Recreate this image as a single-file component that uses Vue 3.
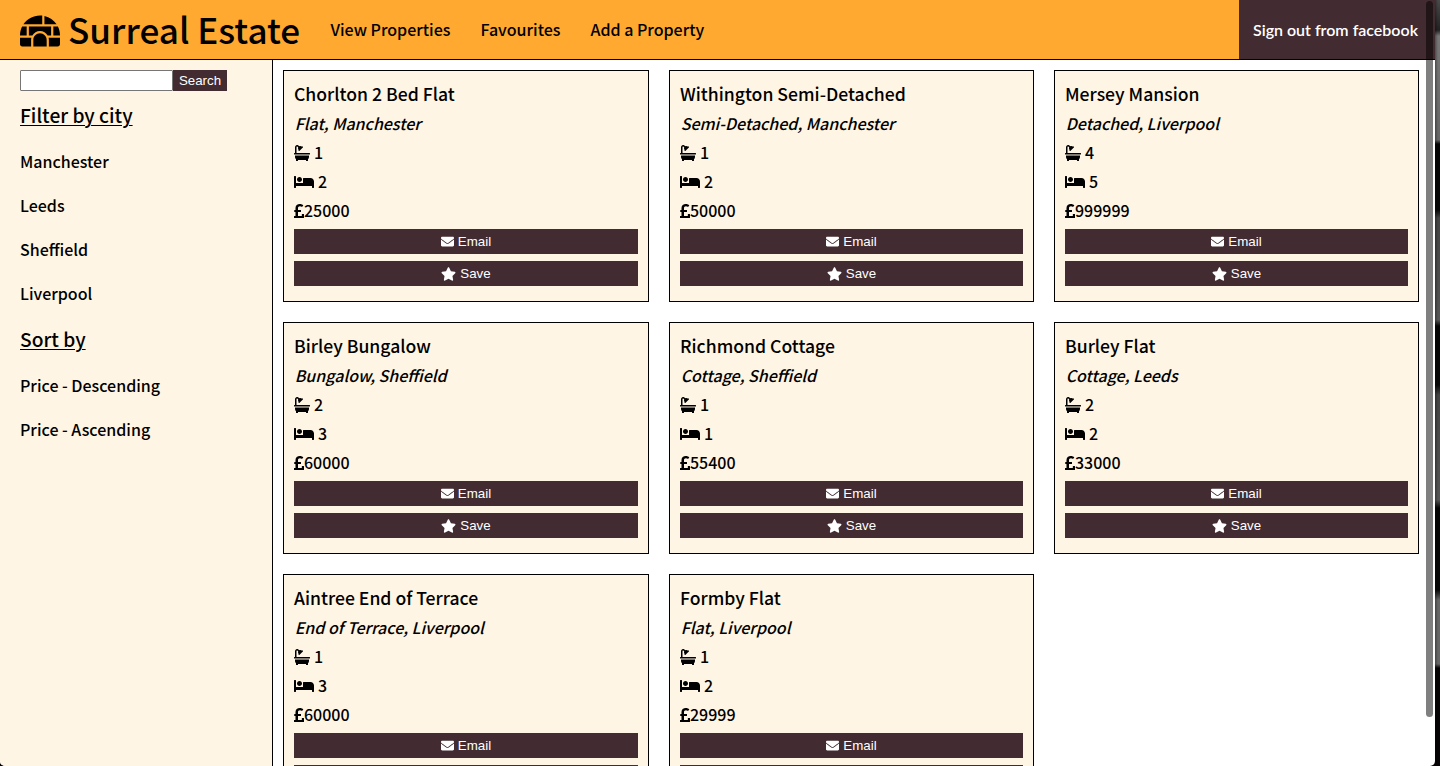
<script setup>
const nav = ['View Properties', 'Favourites', 'Add a Property']
const cities = ['Manchester', 'Leeds', 'Sheffield', 'Liverpool']
const sorts = ['Price - Descending', 'Price - Ascending']
const properties = [
  { title: 'Chorlton 2 Bed Flat', type: 'Flat', city: 'Manchester', baths: 1, beds: 2, price: 25000 },
  { title: 'Withington Semi-Detached', type: 'Semi-Detached', city: 'Manchester', baths: 1, beds: 2, price: 50000 },
  { title: 'Mersey Mansion', type: 'Detached', city: 'Liverpool', baths: 4, beds: 5, price: 999999 },
  { title: 'Birley Bungalow', type: 'Bungalow', city: 'Sheffield', baths: 2, beds: 3, price: 60000 },
  { title: 'Richmond Cottage', type: 'Cottage', city: 'Sheffield', baths: 1, beds: 1, price: 55400 },
  { title: 'Burley Flat', type: 'Cottage', city: 'Leeds', baths: 2, beds: 2, price: 33000 },
  { title: 'Aintree End of Terrace', type: 'End of Terrace', city: 'Liverpool', baths: 1, beds: 3, price: 60000 },
  { title: 'Formby Flat', type: 'Flat', city: 'Liverpool', baths: 1, beds: 2, price: 29999 },
]
</script>

<template>
  <div class="desktop">
    <div class="window">
      <header class="navbar">
        <svg class="logo" viewBox="0 0 576 512"><path d="M320 33.9c-10.5-1.2-21.2-1.9-32-1.9-99.8 0-187.8 50.8-239.4 128H320V33.9zM96 192H30.3C11.1 230.6 0 274 0 320h96V192zM352 39.4V160h175.4C487.2 99.9 424.8 55.9 352 39.4zM480 320h96c0-46-11.1-89.4-30.3-128H480v128zm-64 64v96h128c17.7 0 32-14.3 32-32v-96H411.5c2.6 10.3 4.5 20.9 4.5 32zm32-192H128v128h49.8c22.2-38.1 63-64 110.2-64s88 25.9 110.2 64H448V192zM0 448c0 17.7 14.3 32 32 32h128v-96c0-11.1 1.9-21.7 4.5-32H0v96zm288-160c-53 0-96 43-96 96v96h192v-96c0-53-43-96-96-96z" /></svg>
        <span class="brand">Surreal Estate</span>
        <nav class="links">
          <a v-for="item in nav" :key="item">{{ item }}</a>
        </nav>
        <button class="signout">Sign out from facebook</button>
      </header>

      <div class="body">
        <aside class="sidebar">
          <form class="search">
            <input type="text" />
            <button type="button">Search</button>
          </form>
          <h2>Filter by city</h2>
          <a v-for="c in cities" :key="c">{{ c }}</a>
          <h2>Sort by</h2>
          <a v-for="s in sorts" :key="s">{{ s }}</a>
        </aside>

        <main class="grid">
          <article v-for="p in properties" :key="p.title" class="card">
            <div class="title">{{ p.title }}</div>
            <div class="place">{{ p.type }}, {{ p.city }}</div>
            <div class="row">
              <svg class="bath" viewBox="0 0 512 512"><path d="M32 384a95.4 95.4 0 0 0 32 71.09V496a16 16 0 0 0 16 16h32a16 16 0 0 0 16-16V480H384v16a16 16 0 0 0 16 16h32a16 16 0 0 0 16-16V455.09A95.4 95.4 0 0 0 480 384V336H32zM496 256H80V69.25a21.26 21.26 0 0 1 36.28-15l19.27 19.26c-13.13 29.88-7.61 59.11 8.62 79.73l-.17.17A16 16 0 0 0 144 176l11.31 11.31a16 16 0 0 0 22.63 0L283.31 81.94a16 16 0 0 0 0-22.63L272 48a16 16 0 0 0-22.62 0l-.17.17c-20.62-16.23-49.83-21.75-79.73-8.62L150.22 20.28A69.25 69.25 0 0 0 32 69.25V256H16A16 16 0 0 0 0 272v16a16 16 0 0 0 16 16H496a16 16 0 0 0 16-16V272A16 16 0 0 0 496 256Z" /></svg>
              <span>{{ p.baths }}</span>
            </div>
            <div class="row">
              <svg class="bed" viewBox="0 0 640 512"><path d="M176 256c44.11 0 80-35.89 80-80s-35.89-80-80-80-80 35.89-80 80 35.89 80 80 80zm352-128H304c-8.84 0-16 7.16-16 16v144H64V80c0-8.84-7.16-16-16-16H16C7.16 64 0 71.16 0 80v352c0 8.84 7.16 16 16 16h32c8.84 0 16-7.16 16-16v-48h512v48c0 8.84 7.16 16 16 16h32c8.84 0 16-7.16 16-16V240c0-61.86-50.14-112-112-112z" /></svg>
              <span>{{ p.beds }}</span>
            </div>
            <div class="row price">
              <svg class="pound" viewBox="0 0 320 512"><path d="M308 352h-45.495c-6.627 0-12 5.373-12 12v50.848H128V288h84c6.627 0 12-5.373 12-12v-40c0-6.627-5.373-12-12-12h-84v-63.556c0-32.266 24.562-57.086 61.792-57.086 23.658 0 45.878 11.505 57.652 18.849 5.151 3.213 11.888 2.051 15.688-2.685l28.493-35.513c4.233-5.276 3.279-13.005-2.119-17.081C273.124 54.56 236.576 32 187.931 32 106.026 32 48 84.742 48 157.961V224H20c-6.627 0-12 5.373-12 12v40c0 6.627 5.373 12 12 12h28v128H12c-6.627 0-12 5.373-12 12v40c0 6.627 5.373 12 12 12h296c6.627 0 12-5.373 12-12V364c0-6.627-5.373-12-12-12z" /></svg>
              <span>{{ p.price }}</span>
            </div>
            <button class="action">
              <svg class="mail" viewBox="0 0 512 512"><path d="M502.3 190.8c3.9-3.1 9.7-.2 9.7 4.7V400c0 26.5-21.5 48-48 48H48c-26.5 0-48-21.5-48-48V195.6c0-5 5.7-7.8 9.7-4.7 22.4 17.4 52.1 39.5 154.1 113.6 21.1 15.4 56.7 47.8 92.2 47.6 35.7.3 72-32.8 92.3-47.6 102-74.1 131.6-96.3 154-113.7zM256 320c23.2.4 56.6-29.2 73.4-41.4 132.7-96.3 142.8-104.7 173.4-128.7 5.8-4.5 9.2-11.5 9.2-18.9v-19c0-26.5-21.5-48-48-48H48c-26.5 0-48 21.5-48 48v19c0 7.4 3.4 14.3 9.2 18.9 30.6 23.9 40.7 32.4 173.4 128.7 16.8 12.2 50.2 41.8 73.4 41.4z" /></svg>
              <span>Email</span>
            </button>
            <button class="action">
              <svg class="star" viewBox="0 0 576 512"><path d="M259.3 17.8L194 150.2 47.9 171.5c-26.2 3.8-36.7 36.1-17.7 54.6l105.7 103-25 145.5c-4.5 26.3 23.2 46 46.4 33.7L288 439.6l130.7 68.7c23.2 12.2 50.9-7.4 46.4-33.7l-25-145.5 105.7-103c19-18.5 8.5-50.8-17.7-54.6L382 150.2 316.7 17.8c-11.7-23.6-45.6-23.9-57.4 0z" /></svg>
              <span>Save</span>
            </button>
          </article>
        </main>
      </div>
      <div class="scrollbar"></div>
    </div>
  </div>
</template>

<style>
html,
body {
  overflow: hidden;
}
</style>

<style scoped>
* {
  box-sizing: border-box;
}
.desktop {
  width: 1440px;
  height: 766px;
  overflow: hidden;
  background: linear-gradient(90deg, transparent 1435px, rgba(0, 0, 0, 0.35) 1435px, transparent 1438px),
    linear-gradient(#4a4a4a 0, #222 30px, #777 36px, #666 140px, #050505 144px, #080808 210px, #444 218px, #555 320px, #050505 326px, #080808 385px, #444 395px, #555 500px, #050505 508px, #080808 590px, #666 600px, #666 664px, #060404 668px);
  font-family: "Noto Sans CJK JP", "Noto Sans CJK SC", sans-serif;
  font-weight: 500;
  font-size: 16px;
  color: #000;
}
.window {
  position: relative;
  display: flex;
  flex-direction: column;
  width: 1435px;
  height: 766px;
  overflow: hidden;
  background: #fff;
  border-radius: 0 0 5px 5px;
}
svg {
  display: block;
  flex: none;
  fill: currentColor;
}
.navbar {
  display: flex;
  align-items: center;
  flex: none;
  height: 60px;
  padding-left: 20px;
  background: #ffa931;
  border-bottom: 1px solid #000;
}
.logo {
  width: 40px;
  height: 36px;
  margin-top: 3px;
}
.brand {
  width: 270.5px;
  padding-left: 8px;
  font-size: 35.1px;
  line-height: 56px;
  padding-bottom: 2px;
  white-space: nowrap;
}
.links {
  display: flex;
  gap: 30px;
  padding-bottom: 2px;
  line-height: 56px;
  white-space: nowrap;
}
.signout {
  align-self: stretch;
  width: 196px;
  margin-left: auto;
  padding: 0 0 1px 14px;
  border: 0;
  background: #422b31;
  color: #fff;
  font: 600 16px Lato, sans-serif;
  text-align: left;
  white-space: nowrap;
}
.body {
  display: flex;
  flex: 1;
  min-height: 0;
}
.sidebar {
  display: flex;
  flex-direction: column;
  flex: none;
  width: 273px;
  padding: 10px 20px;
  background: #fff5e4;
  border-right: 1px solid #000;
}
.search {
  display: flex;
  height: 21px;
}
.search input {
  width: 153px;
  height: 21px;
  padding: 1px;
  border: 1px solid #767676;
  border-radius: 1px;
  background: #fff;
}
.search button {
  width: 54px;
  height: 21px;
  padding: 0;
  border: 0;
  background: #422b31;
  color: #fff;
  font: 13.33px/21px "Liberation Sans", Arial, sans-serif;
}
.sidebar h2 {
  margin: 0;
  height: 49px;
  font-size: 19.2px;
  font-weight: 500;
  line-height: 48px;
  text-decoration: underline;
  text-decoration-thickness: 1px;
  text-underline-offset: 2px;
}
.sidebar a {
  height: 44px;
  line-height: 43px;
}
.sidebar a + h2 {
  height: 48px;
  line-height: 47px;
}
.grid {
  display: grid;
  grid-template-columns: 366px 365px 365px;
  grid-auto-rows: 232px;
  gap: 20px;
  flex: 1;
  padding: 10px 16px 0 10px;
}
.card {
  padding: 9px 10px;
  background: #fff5e4;
  border: 1px solid #000;
  white-space: nowrap;
}
.title {
  height: 29px;
  font-size: 17.6px;
  line-height: 28px;
}
.place {
  height: 29px;
  padding-left: 0.7px;
  font-style: italic;
  line-height: 29px;
}
.row {
  display: flex;
  align-items: center;
  gap: 4px;
  height: 29px;
  line-height: 29px;
}
.price {
  gap: 0;
}
.bath {
  width: 16px;
  height: 16px;
}
.bed {
  width: 20px;
  height: 16px;
}
.pound {
  width: 10px;
  height: 16px;
}
.action {
  display: flex;
  align-items: center;
  justify-content: center;
  gap: 4px;
  width: 100%;
  height: 25px;
  margin: 4px 0 7px;
  padding: 0;
  border: 0;
  background: #422b31;
  color: #fff;
  font: 13.33px/25px "Liberation Sans", Arial, sans-serif;
}
.action + .action {
  margin-top: 0;
}
.mail {
  width: 13px;
  height: 13px;
}
.star {
  width: 15px;
  height: 14px;
}
.scrollbar {
  position: absolute;
  top: 1px;
  right: 2px;
  width: 7px;
  height: 716px;
  border-radius: 4px;
  background: rgba(0, 0, 0, 0.5);
}
</style>
